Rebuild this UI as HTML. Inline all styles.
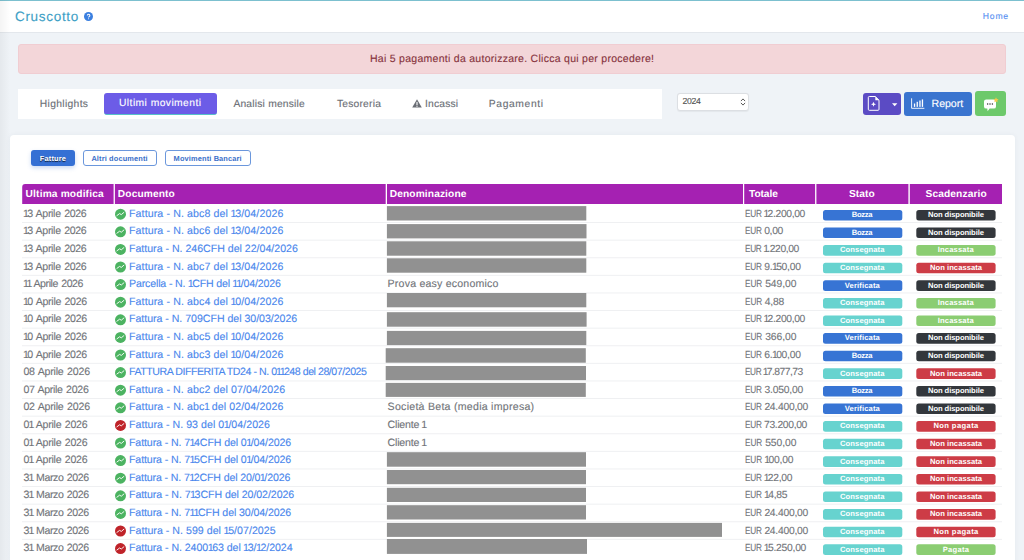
<!DOCTYPE html>
<html><head><meta charset="utf-8">
<style>
*{box-sizing:border-box;margin:0;padding:0}
html,body{width:1024px;height:560px;overflow:hidden}
body{background:#eff3f7;font-family:"Liberation Sans",sans-serif;position:relative;text-rendering:geometricPrecision}
svg{display:block}
.a{position:absolute}
.t{position:absolute;white-space:nowrap;line-height:20px;-webkit-text-stroke:0.12px currentColor}
.n1{margin:0 -1.3px 0 -0.5px}
#hdr{position:absolute;left:0;top:0;width:1024px;height:33px;background:#fff;border-top:1px solid #7cc0cf;border-bottom:1px solid #e3e7ec}
#lshadow{position:absolute;left:0;top:0;width:10px;height:560px;background:linear-gradient(to right,rgba(0,0,0,0.045),rgba(0,0,0,0))}
#alert{position:absolute;left:18px;top:44px;width:988px;height:30px;background:#f3d6d9;border:1px solid #f0cdd2;border-radius:3px}
#tabs{position:absolute;left:18px;top:89px;width:644px;height:30px;background:#fff}
#acttab{position:absolute;left:104px;top:93px;width:113px;height:22px;background:#6c5ce7;border-radius:3px;border-bottom:1px solid #57c1c9}
#year{position:absolute;left:677px;top:93.3px;width:72.3px;height:18.2px;background:#fff;border:1px solid #dcdfe3;border-radius:3px;box-shadow:0 0.5px 1px rgba(0,0,0,0.05)}
.btn{position:absolute;border-radius:3px}
#card{position:absolute;left:10px;top:135px;width:1005px;height:440px;background:#fff;border-radius:4px;box-shadow:0 0 5px rgba(30,50,80,0.05)}
.sbtn{position:absolute;top:150.2px;height:16.1px;border-radius:3px}
#thead{position:absolute;left:23px;top:184px;width:979px;height:20.5px;background:#a521b2;border-radius:3px 3px 0 0}
.sep{position:absolute;top:184px;width:1.5px;height:20.5px;background:#fff}
.line{position:absolute;left:22px;width:980px;height:1px;background:#f1f2f4}
.ic{position:absolute;left:115px;width:11px;height:11px;border-radius:50%}
.g{background:#4cb361}.r{background:#c8282d}
.gray{position:absolute;left:387px;height:14.4px;background:#919191}
.bd{position:absolute;width:79.3px;height:10.5px;border-radius:2.5px}
.s1{left:823px}.s2{left:916.3px}
.bz{background:#3774d4}.cs{background:#62d2cf}.vf{background:#3774d4}
.nd{background:#33373c}.inc{background:#8bcd72}.ni{background:#d33a44}
</style></head><body>
<div id="hdr"></div>
<div class="a" style="left:84.2px;top:12px;width:9.2px;height:9.2px;border-radius:50%;background:#3a7fe0"><svg width="9.2" height="9.2" viewBox="0 0 10 10"><path d="M3.6 3.9 Q3.6 2.5 5 2.5 Q6.4 2.5 6.4 3.8 Q6.4 4.6 5.5 5 Q5 5.3 5 6" fill="none" stroke="#fff" stroke-width="1.1"/><circle cx="5" cy="7.4" r="0.6" fill="#fff"/></svg></div>
<div id="lshadow"></div>
<div id="alert"></div>
<div id="tabs"></div>
<div id="acttab"></div>
<svg class="a" style="left:412px;top:98.6px" width="10" height="9" viewBox="0 0 10 9"><path d="M5 0.2 L9.8 8.6 H0.2Z" fill="#6a6e75"/><rect x="4.45" y="2.9" width="1.1" height="3.2" fill="#fff"/><rect x="4.45" y="6.7" width="1.1" height="1.1" fill="#fff"/></svg>
<div id="year"></div>
<svg class="a" style="left:740.3px;top:98.3px" width="6" height="8" viewBox="0 0 6 8"><path d="M0.9 3.1 L3 0.9 L5.1 3.1 M0.9 4.9 L3 7.1 L5.1 4.9" fill="none" stroke="#5a5a5a" stroke-width="1"/></svg>
<div class="btn" style="left:863px;top:93px;width:38px;height:22px;background:#5b4bc4">
  <svg class="a" style="left:4px;top:2.4px" width="14" height="17" viewBox="0 0 14 17"><path d="M2.3 1.5 H8.3 L12 5.2 V14.3 Q12 15.3 11 15.3 H2.3 Q1.3 15.3 1.3 14.3 V2.5 Q1.3 1.5 2.3 1.5Z" fill="none" stroke="#fff" stroke-width="1"/><path d="M8.3 1.5 V5.2 H12Z" fill="#fff"/><path d="M6.5 6.8 L7.2 8.6 L9 9.3 L7.2 10 L6.5 11.8 L5.8 10 L4 9.3 L5.8 8.6Z" fill="#fff"/></svg>
  <svg class="a" style="left:28.5px;top:9.5px" width="6" height="4" viewBox="0 0 6 4"><path d="M0 0.3 H5.4 L2.7 3.3Z" fill="#fff"/></svg>
</div>
<div class="btn" style="left:904px;top:92px;width:68px;height:24px;background:#3a74cf">
  <svg class="a" style="left:6.5px;top:5.5px" width="14" height="11" viewBox="0 0 14 11"><path d="M0.6 0.3 V10.3 H13.4" fill="none" stroke="#fff" stroke-width="0.9"/><rect x="2.9" y="5.5" width="1.3" height="3.4" fill="#fff"/><rect x="5.6" y="3.8" width="1.3" height="5.1" fill="#fff"/><rect x="8.3" y="2.5" width="1.3" height="6.4" fill="#fff"/><rect x="10.8" y="1.4" width="1.3" height="7.5" fill="#fff"/></svg>
</div>
<div class="btn" style="left:974.5px;top:91.3px;width:31.5px;height:24.7px;background:#6dc96b">
  <svg class="a" style="left:8px;top:5.5px" width="16" height="15" viewBox="0 0 16 15"><path d="M3.2 2.4 H10.8 Q13 2.4 13 4.6 V9.4 Q13 11.6 10.8 11.6 H6.6 L4.6 14.2 L4.3 11.6 H3.2 Q1 11.6 1 9.4 V4.6 Q1 2.4 3.2 2.4Z" fill="#fff"/><circle cx="4.6" cy="7" r="0.75" fill="#333"/><circle cx="7" cy="7" r="0.75" fill="#333"/><circle cx="9.4" cy="7" r="0.75" fill="#333"/><path d="M13 0.3 L13.8 2 L15.6 2.3 L14.3 3.5 L14.6 5.3 L13 4.4 L11.4 5.3 L11.7 3.5 L10.4 2.3 L12.2 2Z" fill="#f5c84a"/></svg>
</div>
<div id="card"></div>
<div class="sbtn" style="left:31px;width:44px;background:#3570d4;box-shadow:0 2px 4px rgba(53,112,212,0.25)"></div>
<div class="sbtn" style="left:83px;width:74px;border:1px solid #6b97dc"></div>
<div class="sbtn" style="left:164.5px;width:86.2px;border:1px solid #6b97dc"></div>
<svg class="a" style="left:0;top:0" width="1024" height="560" viewBox="0 0 1024 560">
<path d="M22.2 204 V187 Q22.2 184 25.2 184 H1002 V204Z" fill="#a521b2"/>
<rect x="113.6" y="184" width="1.3" height="20" fill="#fff"/>
<rect x="385.7" y="184" width="1.3" height="20" fill="#fff"/>
<rect x="743" y="184" width="1.2" height="20" fill="#fff"/>
<rect x="815.1" y="184" width="1.3" height="20" fill="#fff"/>
<rect x="908.4" y="184" width="1.4" height="20" fill="#fff"/>
<rect x="386.9" y="206.1" width="199.40" height="14.40" fill="#919191"/>
<rect x="823" y="209.90" width="79.3" height="10.6" rx="2.5" fill="#3774d4"/>
<rect x="916.3" y="209.90" width="79.3" height="10.6" rx="2.5" fill="#33373c"/>
<g transform="translate(115,208.70)"><circle cx="5.5" cy="5.5" r="5.5" fill="#4cb361"/><path d="M1.9 6.9 L4.6 4.9 L6.3 5.9 L8.9 3.7" stroke="#fff" stroke-width="1" fill="none" stroke-linecap="round" stroke-linejoin="round" opacity="0.92"/></g>
<rect x="22" y="222.05" width="980" height="1" fill="#eff0f2"/>
<rect x="386.9" y="224.1" width="199.60" height="14.30" fill="#919191"/>
<rect x="823" y="227.50" width="79.3" height="10.6" rx="2.5" fill="#3774d4"/>
<rect x="916.3" y="227.50" width="79.3" height="10.6" rx="2.5" fill="#33373c"/>
<g transform="translate(115,226.30)"><circle cx="5.5" cy="5.5" r="5.5" fill="#4cb361"/><path d="M1.9 6.9 L4.6 4.9 L6.3 5.9 L8.9 3.7" stroke="#fff" stroke-width="1" fill="none" stroke-linecap="round" stroke-linejoin="round" opacity="0.92"/></g>
<rect x="22" y="239.65" width="980" height="1" fill="#eff0f2"/>
<rect x="386.9" y="241.3" width="199.40" height="14.40" fill="#919191"/>
<rect x="823" y="245.10" width="79.3" height="10.6" rx="2.5" fill="#67d3cf"/>
<rect x="916.3" y="245.10" width="79.3" height="10.6" rx="2.5" fill="#8bcd72"/>
<g transform="translate(115,243.90)"><circle cx="5.5" cy="5.5" r="5.5" fill="#4cb361"/><path d="M1.9 6.9 L4.6 4.9 L6.3 5.9 L8.9 3.7" stroke="#fff" stroke-width="1" fill="none" stroke-linecap="round" stroke-linejoin="round" opacity="0.92"/></g>
<rect x="22" y="257.25" width="980" height="1" fill="#eff0f2"/>
<rect x="386.9" y="258.3" width="199.40" height="14.40" fill="#919191"/>
<rect x="823" y="262.70" width="79.3" height="10.6" rx="2.5" fill="#67d3cf"/>
<rect x="916.3" y="262.70" width="79.3" height="10.6" rx="2.5" fill="#cd3c46"/>
<g transform="translate(115,261.50)"><circle cx="5.5" cy="5.5" r="5.5" fill="#4cb361"/><path d="M1.9 6.9 L4.6 4.9 L6.3 5.9 L8.9 3.7" stroke="#fff" stroke-width="1" fill="none" stroke-linecap="round" stroke-linejoin="round" opacity="0.92"/></g>
<rect x="22" y="274.85" width="980" height="1" fill="#eff0f2"/>
<rect x="823" y="280.30" width="79.3" height="10.6" rx="2.5" fill="#3774d4"/>
<rect x="916.3" y="280.30" width="79.3" height="10.6" rx="2.5" fill="#33373c"/>
<g transform="translate(115,279.10)"><circle cx="5.5" cy="5.5" r="5.5" fill="#4cb361"/><path d="M1.9 6.9 L4.6 4.9 L6.3 5.9 L8.9 3.7" stroke="#fff" stroke-width="1" fill="none" stroke-linecap="round" stroke-linejoin="round" opacity="0.92"/></g>
<rect x="22" y="292.45" width="980" height="1" fill="#eff0f2"/>
<rect x="386.9" y="293.0" width="199.40" height="14.30" fill="#919191"/>
<rect x="823" y="297.90" width="79.3" height="10.6" rx="2.5" fill="#67d3cf"/>
<rect x="916.3" y="297.90" width="79.3" height="10.6" rx="2.5" fill="#8bcd72"/>
<g transform="translate(115,296.70)"><circle cx="5.5" cy="5.5" r="5.5" fill="#4cb361"/><path d="M1.9 6.9 L4.6 4.9 L6.3 5.9 L8.9 3.7" stroke="#fff" stroke-width="1" fill="none" stroke-linecap="round" stroke-linejoin="round" opacity="0.92"/></g>
<rect x="22" y="310.05" width="980" height="1" fill="#eff0f2"/>
<rect x="386.9" y="312.2" width="199.70" height="14.50" fill="#919191"/>
<rect x="823" y="315.50" width="79.3" height="10.6" rx="2.5" fill="#67d3cf"/>
<rect x="916.3" y="315.50" width="79.3" height="10.6" rx="2.5" fill="#8bcd72"/>
<g transform="translate(115,314.30)"><circle cx="5.5" cy="5.5" r="5.5" fill="#4cb361"/><path d="M1.9 6.9 L4.6 4.9 L6.3 5.9 L8.9 3.7" stroke="#fff" stroke-width="1" fill="none" stroke-linecap="round" stroke-linejoin="round" opacity="0.92"/></g>
<rect x="22" y="327.65" width="980" height="1" fill="#eff0f2"/>
<rect x="386.9" y="330.9" width="199.40" height="14.60" fill="#919191"/>
<rect x="823" y="333.10" width="79.3" height="10.6" rx="2.5" fill="#3774d4"/>
<rect x="916.3" y="333.10" width="79.3" height="10.6" rx="2.5" fill="#33373c"/>
<g transform="translate(115,331.90)"><circle cx="5.5" cy="5.5" r="5.5" fill="#4cb361"/><path d="M1.9 6.9 L4.6 4.9 L6.3 5.9 L8.9 3.7" stroke="#fff" stroke-width="1" fill="none" stroke-linecap="round" stroke-linejoin="round" opacity="0.92"/></g>
<rect x="22" y="345.25" width="980" height="1" fill="#eff0f2"/>
<rect x="385.7" y="348.2" width="200.10" height="14.60" fill="#919191"/>
<rect x="823" y="350.70" width="79.3" height="10.6" rx="2.5" fill="#3774d4"/>
<rect x="916.3" y="350.70" width="79.3" height="10.6" rx="2.5" fill="#33373c"/>
<g transform="translate(115,349.50)"><circle cx="5.5" cy="5.5" r="5.5" fill="#4cb361"/><path d="M1.9 6.9 L4.6 4.9 L6.3 5.9 L8.9 3.7" stroke="#fff" stroke-width="1" fill="none" stroke-linecap="round" stroke-linejoin="round" opacity="0.92"/></g>
<rect x="22" y="362.85" width="980" height="1" fill="#eff0f2"/>
<rect x="385.7" y="366.0" width="200.30" height="14.30" fill="#919191"/>
<rect x="823" y="368.30" width="79.3" height="10.6" rx="2.5" fill="#67d3cf"/>
<rect x="916.3" y="368.30" width="79.3" height="10.6" rx="2.5" fill="#cd3c46"/>
<g transform="translate(115,367.10)"><circle cx="5.5" cy="5.5" r="5.5" fill="#4cb361"/><path d="M1.9 6.9 L4.6 4.9 L6.3 5.9 L8.9 3.7" stroke="#fff" stroke-width="1" fill="none" stroke-linecap="round" stroke-linejoin="round" opacity="0.92"/></g>
<rect x="22" y="380.45" width="980" height="1" fill="#eff0f2"/>
<rect x="385.7" y="382.9" width="200.10" height="14.00" fill="#919191"/>
<rect x="823" y="385.90" width="79.3" height="10.6" rx="2.5" fill="#3774d4"/>
<rect x="916.3" y="385.90" width="79.3" height="10.6" rx="2.5" fill="#33373c"/>
<g transform="translate(115,384.70)"><circle cx="5.5" cy="5.5" r="5.5" fill="#4cb361"/><path d="M1.9 6.9 L4.6 4.9 L6.3 5.9 L8.9 3.7" stroke="#fff" stroke-width="1" fill="none" stroke-linecap="round" stroke-linejoin="round" opacity="0.92"/></g>
<rect x="22" y="398.05" width="980" height="1" fill="#eff0f2"/>
<rect x="823" y="403.50" width="79.3" height="10.6" rx="2.5" fill="#3774d4"/>
<rect x="916.3" y="403.50" width="79.3" height="10.6" rx="2.5" fill="#33373c"/>
<g transform="translate(115,402.30)"><circle cx="5.5" cy="5.5" r="5.5" fill="#4cb361"/><path d="M1.9 6.9 L4.6 4.9 L6.3 5.9 L8.9 3.7" stroke="#fff" stroke-width="1" fill="none" stroke-linecap="round" stroke-linejoin="round" opacity="0.92"/></g>
<rect x="22" y="415.65" width="980" height="1" fill="#eff0f2"/>
<rect x="823" y="421.10" width="79.3" height="10.6" rx="2.5" fill="#67d3cf"/>
<rect x="916.3" y="421.10" width="79.3" height="10.6" rx="2.5" fill="#cd3c46"/>
<g transform="translate(115,419.90)"><circle cx="5.5" cy="5.5" r="5.5" fill="#bf2329"/><path d="M1.9 6.9 L4.6 4.9 L6.3 5.9 L8.9 3.7" stroke="#fff" stroke-width="1" fill="none" stroke-linecap="round" stroke-linejoin="round" opacity="0.92"/></g>
<rect x="22" y="433.25" width="980" height="1" fill="#eff0f2"/>
<rect x="823" y="438.70" width="79.3" height="10.6" rx="2.5" fill="#67d3cf"/>
<rect x="916.3" y="438.70" width="79.3" height="10.6" rx="2.5" fill="#cd3c46"/>
<g transform="translate(115,437.50)"><circle cx="5.5" cy="5.5" r="5.5" fill="#4cb361"/><path d="M1.9 6.9 L4.6 4.9 L6.3 5.9 L8.9 3.7" stroke="#fff" stroke-width="1" fill="none" stroke-linecap="round" stroke-linejoin="round" opacity="0.92"/></g>
<rect x="22" y="450.85" width="980" height="1" fill="#eff0f2"/>
<rect x="386.9" y="452.2" width="199.10" height="14.50" fill="#919191"/>
<rect x="823" y="456.30" width="79.3" height="10.6" rx="2.5" fill="#67d3cf"/>
<rect x="916.3" y="456.30" width="79.3" height="10.6" rx="2.5" fill="#cd3c46"/>
<g transform="translate(115,455.10)"><circle cx="5.5" cy="5.5" r="5.5" fill="#4cb361"/><path d="M1.9 6.9 L4.6 4.9 L6.3 5.9 L8.9 3.7" stroke="#fff" stroke-width="1" fill="none" stroke-linecap="round" stroke-linejoin="round" opacity="0.92"/></g>
<rect x="22" y="468.45" width="980" height="1" fill="#eff0f2"/>
<rect x="386.9" y="470.0" width="199.10" height="14.20" fill="#919191"/>
<rect x="823" y="473.90" width="79.3" height="10.6" rx="2.5" fill="#67d3cf"/>
<rect x="916.3" y="473.90" width="79.3" height="10.6" rx="2.5" fill="#cd3c46"/>
<g transform="translate(115,472.70)"><circle cx="5.5" cy="5.5" r="5.5" fill="#4cb361"/><path d="M1.9 6.9 L4.6 4.9 L6.3 5.9 L8.9 3.7" stroke="#fff" stroke-width="1" fill="none" stroke-linecap="round" stroke-linejoin="round" opacity="0.92"/></g>
<rect x="22" y="486.05" width="980" height="1" fill="#eff0f2"/>
<rect x="386.9" y="487.8" width="199.10" height="14.20" fill="#919191"/>
<rect x="823" y="491.50" width="79.3" height="10.6" rx="2.5" fill="#67d3cf"/>
<rect x="916.3" y="491.50" width="79.3" height="10.6" rx="2.5" fill="#cd3c46"/>
<g transform="translate(115,490.30)"><circle cx="5.5" cy="5.5" r="5.5" fill="#4cb361"/><path d="M1.9 6.9 L4.6 4.9 L6.3 5.9 L8.9 3.7" stroke="#fff" stroke-width="1" fill="none" stroke-linecap="round" stroke-linejoin="round" opacity="0.92"/></g>
<rect x="22" y="503.65" width="980" height="1" fill="#eff0f2"/>
<rect x="386.9" y="505.2" width="199.10" height="14.30" fill="#919191"/>
<rect x="823" y="509.10" width="79.3" height="10.6" rx="2.5" fill="#67d3cf"/>
<rect x="916.3" y="509.10" width="79.3" height="10.6" rx="2.5" fill="#cd3c46"/>
<g transform="translate(115,507.90)"><circle cx="5.5" cy="5.5" r="5.5" fill="#4cb361"/><path d="M1.9 6.9 L4.6 4.9 L6.3 5.9 L8.9 3.7" stroke="#fff" stroke-width="1" fill="none" stroke-linecap="round" stroke-linejoin="round" opacity="0.92"/></g>
<rect x="22" y="521.25" width="980" height="1" fill="#eff0f2"/>
<rect x="386.9" y="522.9" width="335.10" height="14.00" fill="#919191"/>
<rect x="823" y="526.70" width="79.3" height="10.6" rx="2.5" fill="#67d3cf"/>
<rect x="916.3" y="526.70" width="79.3" height="10.6" rx="2.5" fill="#cd3c46"/>
<g transform="translate(115,525.50)"><circle cx="5.5" cy="5.5" r="5.5" fill="#bf2329"/><path d="M1.9 6.9 L4.6 4.9 L6.3 5.9 L8.9 3.7" stroke="#fff" stroke-width="1" fill="none" stroke-linecap="round" stroke-linejoin="round" opacity="0.92"/></g>
<rect x="22" y="538.85" width="980" height="1" fill="#eff0f2"/>
<rect x="386.9" y="539.0" width="200.10" height="14.90" fill="#919191"/>
<rect x="823" y="544.30" width="79.3" height="10.6" rx="2.5" fill="#67d3cf"/>
<rect x="916.3" y="544.30" width="79.3" height="10.6" rx="2.5" fill="#8bcd72"/>
<g transform="translate(115,543.10)"><circle cx="5.5" cy="5.5" r="5.5" fill="#bf2329"/><path d="M1.9 6.9 L4.6 4.9 L6.3 5.9 L8.9 3.7" stroke="#fff" stroke-width="1" fill="none" stroke-linecap="round" stroke-linejoin="round" opacity="0.92"/></g>
</svg>
<div class="t" id="t0" style="left:15.00px;top:6.71px;font-size:13.5px;font-weight:400;color:#3e9fc6;letter-spacing:0.688px;">Cruscotto</div>
<div class="t" id="t1" style="left:982.80px;top:5.91px;font-size:8.6px;font-weight:400;color:#5790f2;letter-spacing:0.800px;">Home</div>
<div class="t" id="t2" style="left:370.00px;top:48.70px;font-size:10.5px;font-weight:400;color:#86323c;letter-spacing:0.277px;">Hai 5 pagamenti da autorizzare. Clicca qui per procedere!</div>
<div class="t" id="t3" style="left:39.80px;top:94.72px;font-size:10.3px;font-weight:400;color:#6a6e75;letter-spacing:0.333px;">Highlights</div>
<div class="t" id="t4" style="left:119.00px;top:94.00px;font-size:10.3px;font-weight:400;color:#ffffff;letter-spacing:0.433px;">Ultimi movimenti</div>
<div class="t" id="t5" style="left:233.40px;top:94.81px;font-size:10.3px;font-weight:400;color:#6a6e75;letter-spacing:0.193px;">Analisi mensile</div>
<div class="t" id="t6" style="left:337.00px;top:94.72px;font-size:10.3px;font-weight:400;color:#6a6e75;letter-spacing:0.188px;">Tesoreria</div>
<div class="t" id="t7" style="left:425.00px;top:94.72px;font-size:10.3px;font-weight:400;color:#6a6e75;letter-spacing:0.167px;">Incassi</div>
<div class="t" id="t8" style="left:488.80px;top:94.72px;font-size:10.3px;font-weight:400;color:#6a6e75;letter-spacing:0.625px;">Pagamenti</div>
<div class="t" id="t9" style="left:682.40px;top:91.20px;font-size:8.7px;font-weight:400;color:#555555;letter-spacing:-0.333px;">2024</div>
<div class="t" id="t10" style="left:931.60px;top:93.76px;font-size:10.6px;font-weight:400;color:#ffffff;letter-spacing:-0.060px;">Report</div>
<div class="t" id="t11" style="left:39.80px;top:148.82px;font-size:7.4px;font-weight:700;color:#ffffff;letter-spacing:0.167px;text-shadow:0 0.6px 0.8px rgba(0,0,0,0.75);-webkit-text-stroke:0">Fatture</div>
<div class="t" id="t12" style="left:91.40px;top:148.82px;font-size:7.4px;font-weight:700;color:#3a6fc9;letter-spacing:0.143px;;-webkit-text-stroke:0">Altri documenti</div>
<div class="t" id="t13" style="left:173.60px;top:148.82px;font-size:7.4px;font-weight:700;color:#3a6fc9;letter-spacing:0.144px;;-webkit-text-stroke:0">Movimenti Bancari</div>
<div class="t" id="t14" style="left:25.60px;top:185.00px;font-size:10.2px;font-weight:700;color:#ffffff;letter-spacing:0.157px;;-webkit-text-stroke:0">Ultima modifica</div>
<div class="t" id="t15" style="left:117.80px;top:185.00px;font-size:10.2px;font-weight:700;color:#ffffff;letter-spacing:0.125px;;-webkit-text-stroke:0">Documento</div>
<div class="t" id="t16" style="left:389.80px;top:185.00px;font-size:10.2px;font-weight:700;color:#ffffff;letter-spacing:0.108px;;-webkit-text-stroke:0">Denominazione</div>
<div class="t" id="t17" style="left:749.00px;top:185.00px;font-size:10.2px;font-weight:700;color:#ffffff;letter-spacing:-0.080px;;-webkit-text-stroke:0">Totale</div>
<div class="t" id="t18" style="left:849.00px;top:185.00px;font-size:10.2px;font-weight:700;color:#ffffff;letter-spacing:0.062px;;-webkit-text-stroke:0">Stato</div>
<div class="t" id="t19" style="left:925.60px;top:185.00px;font-size:10.2px;font-weight:700;color:#ffffff;letter-spacing:0.100px;;-webkit-text-stroke:0">Scadenzario</div>
<div class="t" id="t20" style="left:23.40px;top:203.70px;font-size:10.6px;font-weight:400;color:#717479;letter-spacing:-0.323px;word-spacing:0.8px"><span class="n1">1</span>3 Aprile 2026</div>
<div class="t" id="t21" style="left:129.00px;top:203.70px;font-size:10.6px;font-weight:400;color:#4a87ed;letter-spacing:0.116px;">Fattura - N. abc8 del <span class="n1">1</span>3/04/2026</div>
<div class="t" id="t22" style="left:745.00px;top:204.72px;font-size:10.3px;font-weight:400;color:#717479;letter-spacing:-0.333px;"><span style="display:inline-block;transform:scaleX(0.8);transform-origin:0 0;margin-right:-4.3px">EUR</span> <span class="n1">1</span>2.200,00</div>
<div class="t" id="t23" style="left:851.80px;top:205.11px;font-size:7.6px;font-weight:700;color:#ffffff;letter-spacing:-0.325px;;-webkit-text-stroke:0">Bozza</div>
<div class="t" id="t24" style="left:928.00px;top:205.11px;font-size:7.6px;font-weight:700;color:#ffffff;letter-spacing:-0.071px;;-webkit-text-stroke:0">Non disponibile</div>
<div class="t" id="t25" style="left:23.40px;top:221.31px;font-size:10.6px;font-weight:400;color:#717479;letter-spacing:-0.323px;word-spacing:0.8px"><span class="n1">1</span>3 Aprile 2026</div>
<div class="t" id="t26" style="left:129.00px;top:221.31px;font-size:10.6px;font-weight:400;color:#4a87ed;letter-spacing:0.116px;">Fattura - N. abc6 del <span class="n1">1</span>3/04/2026</div>
<div class="t" id="t27" style="left:745.00px;top:222.31px;font-size:10.3px;font-weight:400;color:#717479;letter-spacing:-0.286px;"><span style="display:inline-block;transform:scaleX(0.8);transform-origin:0 0;margin-right:-4.3px">EUR</span> 0,00</div>
<div class="t" id="t28" style="left:851.80px;top:222.70px;font-size:7.6px;font-weight:700;color:#ffffff;letter-spacing:-0.325px;;-webkit-text-stroke:0">Bozza</div>
<div class="t" id="t29" style="left:928.00px;top:222.70px;font-size:7.6px;font-weight:700;color:#ffffff;letter-spacing:-0.071px;;-webkit-text-stroke:0">Non disponibile</div>
<div class="t" id="t30" style="left:23.40px;top:238.90px;font-size:10.6px;font-weight:400;color:#717479;letter-spacing:-0.323px;word-spacing:0.8px"><span class="n1">1</span>3 Aprile 2026</div>
<div class="t" id="t31" style="left:129.00px;top:238.90px;font-size:10.6px;font-weight:400;color:#4a87ed;letter-spacing:-0.006px;">Fattura - N. 246CFH del 22/04/2026</div>
<div class="t" id="t32" style="left:745.00px;top:239.91px;font-size:10.3px;font-weight:400;color:#717479;letter-spacing:-0.391px;"><span style="display:inline-block;transform:scaleX(0.8);transform-origin:0 0;margin-right:-4.3px">EUR</span> <span class="n1">1</span>.220,00</div>
<div class="t" id="t33" style="left:840.00px;top:240.30px;font-size:7.6px;font-weight:700;color:#ffffff;letter-spacing:0.111px;;-webkit-text-stroke:0">Consegnata</div>
<div class="t" id="t34" style="left:937.80px;top:240.30px;font-size:7.6px;font-weight:700;color:#ffffff;letter-spacing:0.150px;;-webkit-text-stroke:0">Incassata</div>
<div class="t" id="t35" style="left:23.40px;top:256.51px;font-size:10.6px;font-weight:400;color:#717479;letter-spacing:-0.323px;word-spacing:0.8px"><span class="n1">1</span>3 Aprile 2026</div>
<div class="t" id="t36" style="left:129.00px;top:256.51px;font-size:10.6px;font-weight:400;color:#4a87ed;letter-spacing:0.116px;">Fattura - N. abc7 del <span class="n1">1</span>3/04/2026</div>
<div class="t" id="t37" style="left:745.00px;top:257.50px;font-size:10.3px;font-weight:400;color:#717479;letter-spacing:-0.245px;"><span style="display:inline-block;transform:scaleX(0.8);transform-origin:0 0;margin-right:-4.3px">EUR</span> 9.<span class="n1">1</span>50,00</div>
<div class="t" id="t38" style="left:840.00px;top:257.91px;font-size:7.6px;font-weight:700;color:#ffffff;letter-spacing:0.111px;;-webkit-text-stroke:0">Consegnata</div>
<div class="t" id="t39" style="left:930.00px;top:257.91px;font-size:7.6px;font-weight:700;color:#ffffff;letter-spacing:0.042px;;-webkit-text-stroke:0">Non incassata</div>
<div class="t" id="t40" style="left:23.40px;top:274.10px;font-size:10.6px;font-weight:400;color:#717479;letter-spacing:-0.438px;word-spacing:0.8px"><span class="n1">1</span><span class="n1">1</span> Aprile 2026</div>
<div class="t" id="t41" style="left:129.00px;top:274.10px;font-size:10.6px;font-weight:400;color:#4a87ed;letter-spacing:-0.144px;">Parcella - N. <span class="n1">1</span>CFH del <span class="n1">1</span><span class="n1">1</span>/04/2026</div>
<div class="t" id="t42" style="left:387.60px;top:274.10px;font-size:10.6px;font-weight:400;color:#717479;letter-spacing:0.195px;">Prova easy economico</div>
<div class="t" id="t43" style="left:745.00px;top:275.11px;font-size:10.3px;font-weight:400;color:#717479;letter-spacing:-0.044px;"><span style="display:inline-block;transform:scaleX(0.8);transform-origin:0 0;margin-right:-4.3px">EUR</span> 549,00</div>
<div class="t" id="t44" style="left:844.80px;top:275.50px;font-size:7.6px;font-weight:700;color:#ffffff;letter-spacing:0.133px;;-webkit-text-stroke:0">Verificata</div>
<div class="t" id="t45" style="left:928.00px;top:275.50px;font-size:7.6px;font-weight:700;color:#ffffff;letter-spacing:-0.071px;;-webkit-text-stroke:0">Non disponibile</div>
<div class="t" id="t46" style="left:23.40px;top:291.70px;font-size:10.6px;font-weight:400;color:#717479;letter-spacing:-0.285px;word-spacing:0.8px"><span class="n1">1</span>0 Aprile 2026</div>
<div class="t" id="t47" style="left:129.00px;top:291.70px;font-size:10.6px;font-weight:400;color:#4a87ed;letter-spacing:0.116px;">Fattura - N. abc4 del <span class="n1">1</span>0/04/2026</div>
<div class="t" id="t48" style="left:745.00px;top:292.72px;font-size:10.3px;font-weight:400;color:#717479;letter-spacing:-0.143px;"><span style="display:inline-block;transform:scaleX(0.8);transform-origin:0 0;margin-right:-4.3px">EUR</span> 4,88</div>
<div class="t" id="t49" style="left:840.00px;top:293.11px;font-size:7.6px;font-weight:700;color:#ffffff;letter-spacing:0.111px;;-webkit-text-stroke:0">Consegnata</div>
<div class="t" id="t50" style="left:937.80px;top:293.11px;font-size:7.6px;font-weight:700;color:#ffffff;letter-spacing:0.150px;;-webkit-text-stroke:0">Incassata</div>
<div class="t" id="t51" style="left:23.40px;top:309.31px;font-size:10.6px;font-weight:400;color:#717479;letter-spacing:-0.285px;word-spacing:0.8px"><span class="n1">1</span>0 Aprile 2026</div>
<div class="t" id="t52" style="left:129.00px;top:309.31px;font-size:10.6px;font-weight:400;color:#4a87ed;letter-spacing:-0.024px;">Fattura - N. 709CFH del 30/03/2026</div>
<div class="t" id="t53" style="left:745.00px;top:310.31px;font-size:10.3px;font-weight:400;color:#717479;letter-spacing:-0.333px;"><span style="display:inline-block;transform:scaleX(0.8);transform-origin:0 0;margin-right:-4.3px">EUR</span> <span class="n1">1</span>2.200,00</div>
<div class="t" id="t54" style="left:840.00px;top:310.70px;font-size:7.6px;font-weight:700;color:#ffffff;letter-spacing:0.111px;;-webkit-text-stroke:0">Consegnata</div>
<div class="t" id="t55" style="left:937.80px;top:310.70px;font-size:7.6px;font-weight:700;color:#ffffff;letter-spacing:0.150px;;-webkit-text-stroke:0">Incassata</div>
<div class="t" id="t56" style="left:23.40px;top:326.90px;font-size:10.6px;font-weight:400;color:#717479;letter-spacing:-0.285px;word-spacing:0.8px"><span class="n1">1</span>0 Aprile 2026</div>
<div class="t" id="t57" style="left:129.00px;top:326.90px;font-size:10.6px;font-weight:400;color:#4a87ed;letter-spacing:0.116px;">Fattura - N. abc5 del <span class="n1">1</span>0/04/2026</div>
<div class="t" id="t58" style="left:745.00px;top:327.91px;font-size:10.3px;font-weight:400;color:#717479;letter-spacing:-0.044px;"><span style="display:inline-block;transform:scaleX(0.8);transform-origin:0 0;margin-right:-4.3px">EUR</span> 366,00</div>
<div class="t" id="t59" style="left:844.80px;top:328.30px;font-size:7.6px;font-weight:700;color:#ffffff;letter-spacing:0.133px;;-webkit-text-stroke:0">Verificata</div>
<div class="t" id="t60" style="left:928.00px;top:328.30px;font-size:7.6px;font-weight:700;color:#ffffff;letter-spacing:-0.071px;;-webkit-text-stroke:0">Non disponibile</div>
<div class="t" id="t61" style="left:23.40px;top:344.51px;font-size:10.6px;font-weight:400;color:#717479;letter-spacing:-0.285px;word-spacing:0.8px"><span class="n1">1</span>0 Aprile 2026</div>
<div class="t" id="t62" style="left:129.00px;top:344.51px;font-size:10.6px;font-weight:400;color:#4a87ed;letter-spacing:0.116px;">Fattura - N. abc3 del <span class="n1">1</span>0/04/2026</div>
<div class="t" id="t63" style="left:745.00px;top:345.50px;font-size:10.3px;font-weight:400;color:#717479;letter-spacing:-0.245px;"><span style="display:inline-block;transform:scaleX(0.8);transform-origin:0 0;margin-right:-4.3px">EUR</span> 6.<span class="n1">1</span>00,00</div>
<div class="t" id="t64" style="left:851.80px;top:345.91px;font-size:7.6px;font-weight:700;color:#ffffff;letter-spacing:-0.325px;;-webkit-text-stroke:0">Bozza</div>
<div class="t" id="t65" style="left:928.00px;top:345.91px;font-size:7.6px;font-weight:700;color:#ffffff;letter-spacing:-0.071px;;-webkit-text-stroke:0">Non disponibile</div>
<div class="t" id="t66" style="left:23.40px;top:362.10px;font-size:10.6px;font-weight:400;color:#717479;letter-spacing:-0.208px;word-spacing:0.8px">08 Aprile 2026</div>
<div class="t" id="t67" style="left:129.00px;top:362.10px;font-size:10.6px;font-weight:400;color:#4a87ed;letter-spacing:-0.452px;">FATTURA DIFFERITA TD24 - N. 0<span class="n1">1</span><span class="n1">1</span>248 del 28/07/2025</div>
<div class="t" id="t68" style="left:745.00px;top:363.11px;font-size:10.3px;font-weight:400;color:#717479;letter-spacing:-0.508px;"><span style="display:inline-block;transform:scaleX(0.8);transform-origin:0 0;margin-right:-4.3px">EUR</span> <span class="n1">1</span>7.877,73</div>
<div class="t" id="t69" style="left:840.00px;top:363.50px;font-size:7.6px;font-weight:700;color:#ffffff;letter-spacing:0.111px;;-webkit-text-stroke:0">Consegnata</div>
<div class="t" id="t70" style="left:930.00px;top:363.50px;font-size:7.6px;font-weight:700;color:#ffffff;letter-spacing:0.042px;;-webkit-text-stroke:0">Non incassata</div>
<div class="t" id="t71" style="left:23.40px;top:379.70px;font-size:10.6px;font-weight:400;color:#717479;letter-spacing:-0.304px;word-spacing:0.8px">07 Aprile 2026</div>
<div class="t" id="t72" style="left:129.00px;top:379.70px;font-size:10.6px;font-weight:400;color:#4a87ed;letter-spacing:0.113px;">Fattura - N. abc2 del 07/04/2026</div>
<div class="t" id="t73" style="left:745.00px;top:380.72px;font-size:10.3px;font-weight:400;color:#717479;letter-spacing:-0.200px;"><span style="display:inline-block;transform:scaleX(0.8);transform-origin:0 0;margin-right:-4.3px">EUR</span> 3.050,00</div>
<div class="t" id="t74" style="left:851.80px;top:381.11px;font-size:7.6px;font-weight:700;color:#ffffff;letter-spacing:-0.325px;;-webkit-text-stroke:0">Bozza</div>
<div class="t" id="t75" style="left:928.00px;top:381.11px;font-size:7.6px;font-weight:700;color:#ffffff;letter-spacing:-0.071px;;-webkit-text-stroke:0">Non disponibile</div>
<div class="t" id="t76" style="left:23.40px;top:397.31px;font-size:10.6px;font-weight:400;color:#717479;letter-spacing:-0.208px;word-spacing:0.8px">02 Aprile 2026</div>
<div class="t" id="t77" style="left:129.00px;top:397.31px;font-size:10.6px;font-weight:400;color:#4a87ed;letter-spacing:0.116px;">Fattura - N. abc<span class="n1">1</span> del 02/04/2026</div>
<div class="t" id="t78" style="left:387.60px;top:397.31px;font-size:10.6px;font-weight:400;color:#717479;letter-spacing:0.259px;">Società Beta (media impresa)</div>
<div class="t" id="t79" style="left:745.00px;top:398.31px;font-size:10.3px;font-weight:400;color:#717479;letter-spacing:-0.233px;"><span style="display:inline-block;transform:scaleX(0.8);transform-origin:0 0;margin-right:-4.3px">EUR</span> 24.400,00</div>
<div class="t" id="t80" style="left:844.80px;top:398.70px;font-size:7.6px;font-weight:700;color:#ffffff;letter-spacing:0.133px;;-webkit-text-stroke:0">Verificata</div>
<div class="t" id="t81" style="left:928.00px;top:398.70px;font-size:7.6px;font-weight:700;color:#ffffff;letter-spacing:-0.071px;;-webkit-text-stroke:0">Non disponibile</div>
<div class="t" id="t82" style="left:23.40px;top:414.90px;font-size:10.6px;font-weight:400;color:#717479;letter-spacing:-0.254px;word-spacing:0.8px">0<span class="n1">1</span> Aprile 2026</div>
<div class="t" id="t83" style="left:129.00px;top:414.90px;font-size:10.6px;font-weight:400;color:#4a87ed;letter-spacing:0.048px;">Fattura - N. 93 del 0<span class="n1">1</span>/04/2026</div>
<div class="t" id="t84" style="left:387.60px;top:414.90px;font-size:10.6px;font-weight:400;color:#717479;letter-spacing:-0.212px;">Cliente <span class="n1">1</span></div>
<div class="t" id="t85" style="left:745.00px;top:415.91px;font-size:10.3px;font-weight:400;color:#717479;letter-spacing:-0.317px;"><span style="display:inline-block;transform:scaleX(0.8);transform-origin:0 0;margin-right:-4.3px">EUR</span> 73.200,00</div>
<div class="t" id="t86" style="left:840.00px;top:416.30px;font-size:7.6px;font-weight:700;color:#ffffff;letter-spacing:0.111px;;-webkit-text-stroke:0">Consegnata</div>
<div class="t" id="t87" style="left:933.40px;top:416.30px;font-size:7.6px;font-weight:700;color:#ffffff;letter-spacing:0.400px;;-webkit-text-stroke:0">Non pagata</div>
<div class="t" id="t88" style="left:23.40px;top:432.51px;font-size:10.6px;font-weight:400;color:#717479;letter-spacing:-0.254px;word-spacing:0.8px">0<span class="n1">1</span> Aprile 2026</div>
<div class="t" id="t89" style="left:129.00px;top:432.51px;font-size:10.6px;font-weight:400;color:#4a87ed;letter-spacing:-0.097px;">Fattura - N. 7<span class="n1">1</span>4CFH del 0<span class="n1">1</span>/04/2026</div>
<div class="t" id="t90" style="left:387.60px;top:432.51px;font-size:10.6px;font-weight:400;color:#717479;letter-spacing:-0.212px;">Cliente <span class="n1">1</span></div>
<div class="t" id="t91" style="left:745.00px;top:433.50px;font-size:10.3px;font-weight:400;color:#717479;letter-spacing:-0.044px;"><span style="display:inline-block;transform:scaleX(0.8);transform-origin:0 0;margin-right:-4.3px">EUR</span> 550,00</div>
<div class="t" id="t92" style="left:840.00px;top:433.91px;font-size:7.6px;font-weight:700;color:#ffffff;letter-spacing:0.111px;;-webkit-text-stroke:0">Consegnata</div>
<div class="t" id="t93" style="left:930.00px;top:433.91px;font-size:7.6px;font-weight:700;color:#ffffff;letter-spacing:0.042px;;-webkit-text-stroke:0">Non incassata</div>
<div class="t" id="t94" style="left:23.40px;top:450.10px;font-size:10.6px;font-weight:400;color:#717479;letter-spacing:-0.254px;word-spacing:0.8px">0<span class="n1">1</span> Aprile 2026</div>
<div class="t" id="t95" style="left:129.00px;top:450.10px;font-size:10.6px;font-weight:400;color:#4a87ed;letter-spacing:-0.097px;">Fattura - N. 7<span class="n1">1</span>5CFH del 0<span class="n1">1</span>/04/2026</div>
<div class="t" id="t96" style="left:745.00px;top:451.11px;font-size:10.3px;font-weight:400;color:#717479;letter-spacing:-0.167px;"><span style="display:inline-block;transform:scaleX(0.8);transform-origin:0 0;margin-right:-4.3px">EUR</span> <span class="n1">1</span>00,00</div>
<div class="t" id="t97" style="left:840.00px;top:451.50px;font-size:7.6px;font-weight:700;color:#ffffff;letter-spacing:0.111px;;-webkit-text-stroke:0">Consegnata</div>
<div class="t" id="t98" style="left:930.00px;top:451.50px;font-size:7.6px;font-weight:700;color:#ffffff;letter-spacing:0.042px;;-webkit-text-stroke:0">Non incassata</div>
<div class="t" id="t99" style="left:23.40px;top:467.70px;font-size:10.6px;font-weight:400;color:#717479;letter-spacing:-0.392px;word-spacing:0.8px">3<span class="n1">1</span> Marzo 2026</div>
<div class="t" id="t100" style="left:129.00px;top:467.70px;font-size:10.6px;font-weight:400;color:#4a87ed;letter-spacing:-0.124px;">Fattura - N. 7<span class="n1">1</span>2CFH del 20/0<span class="n1">1</span>/2026</div>
<div class="t" id="t101" style="left:745.00px;top:468.72px;font-size:10.3px;font-weight:400;color:#717479;letter-spacing:-0.278px;"><span style="display:inline-block;transform:scaleX(0.8);transform-origin:0 0;margin-right:-4.3px">EUR</span> <span class="n1">1</span>22,00</div>
<div class="t" id="t102" style="left:840.00px;top:469.11px;font-size:7.6px;font-weight:700;color:#ffffff;letter-spacing:0.111px;;-webkit-text-stroke:0">Consegnata</div>
<div class="t" id="t103" style="left:930.00px;top:469.11px;font-size:7.6px;font-weight:700;color:#ffffff;letter-spacing:0.042px;;-webkit-text-stroke:0">Non incassata</div>
<div class="t" id="t104" style="left:23.40px;top:485.31px;font-size:10.6px;font-weight:400;color:#717479;letter-spacing:-0.392px;word-spacing:0.8px">3<span class="n1">1</span> Marzo 2026</div>
<div class="t" id="t105" style="left:129.00px;top:485.31px;font-size:10.6px;font-weight:400;color:#4a87ed;letter-spacing:-0.061px;">Fattura - N. 7<span class="n1">1</span>3CFH del 20/02/2026</div>
<div class="t" id="t106" style="left:745.00px;top:486.31px;font-size:10.3px;font-weight:400;color:#717479;letter-spacing:-0.225px;"><span style="display:inline-block;transform:scaleX(0.8);transform-origin:0 0;margin-right:-4.3px">EUR</span> <span class="n1">1</span>4,85</div>
<div class="t" id="t107" style="left:840.00px;top:486.70px;font-size:7.6px;font-weight:700;color:#ffffff;letter-spacing:0.111px;;-webkit-text-stroke:0">Consegnata</div>
<div class="t" id="t108" style="left:930.00px;top:486.70px;font-size:7.6px;font-weight:700;color:#ffffff;letter-spacing:0.042px;;-webkit-text-stroke:0">Non incassata</div>
<div class="t" id="t109" style="left:23.40px;top:502.90px;font-size:10.6px;font-weight:400;color:#717479;letter-spacing:-0.392px;word-spacing:0.8px">3<span class="n1">1</span> Marzo 2026</div>
<div class="t" id="t110" style="left:129.00px;top:502.90px;font-size:10.6px;font-weight:400;color:#4a87ed;letter-spacing:-0.097px;">Fattura - N. 7<span class="n1">1</span><span class="n1">1</span>CFH del 30/04/2026</div>
<div class="t" id="t111" style="left:745.00px;top:503.91px;font-size:10.3px;font-weight:400;color:#717479;letter-spacing:-0.233px;"><span style="display:inline-block;transform:scaleX(0.8);transform-origin:0 0;margin-right:-4.3px">EUR</span> 24.400,00</div>
<div class="t" id="t112" style="left:840.00px;top:504.30px;font-size:7.6px;font-weight:700;color:#ffffff;letter-spacing:0.111px;;-webkit-text-stroke:0">Consegnata</div>
<div class="t" id="t113" style="left:930.00px;top:504.30px;font-size:7.6px;font-weight:700;color:#ffffff;letter-spacing:0.042px;;-webkit-text-stroke:0">Non incassata</div>
<div class="t" id="t114" style="left:23.40px;top:520.51px;font-size:10.6px;font-weight:400;color:#717479;letter-spacing:-0.392px;word-spacing:0.8px">3<span class="n1">1</span> Marzo 2026</div>
<div class="t" id="t115" style="left:129.00px;top:520.51px;font-size:10.6px;font-weight:400;color:#4a87ed;letter-spacing:0.037px;">Fattura - N. 599 del <span class="n1">1</span>5/07/2025</div>
<div class="t" id="t116" style="left:745.00px;top:521.50px;font-size:10.3px;font-weight:400;color:#717479;letter-spacing:-0.233px;"><span style="display:inline-block;transform:scaleX(0.8);transform-origin:0 0;margin-right:-4.3px">EUR</span> 24.400,00</div>
<div class="t" id="t117" style="left:840.00px;top:521.91px;font-size:7.6px;font-weight:700;color:#ffffff;letter-spacing:0.111px;;-webkit-text-stroke:0">Consegnata</div>
<div class="t" id="t118" style="left:933.40px;top:521.91px;font-size:7.6px;font-weight:700;color:#ffffff;letter-spacing:0.400px;;-webkit-text-stroke:0">Non pagata</div>
<div class="t" id="t119" style="left:23.40px;top:538.10px;font-size:10.6px;font-weight:400;color:#717479;letter-spacing:-0.392px;word-spacing:0.8px">3<span class="n1">1</span> Marzo 2026</div>
<div class="t" id="t120" style="left:129.00px;top:538.10px;font-size:10.6px;font-weight:400;color:#4a87ed;letter-spacing:-0.056px;">Fattura - N. 2400<span class="n1">1</span>63 del <span class="n1">1</span>3/<span class="n1">1</span>2/2024</div>
<div class="t" id="t121" style="left:745.00px;top:539.11px;font-size:10.3px;font-weight:400;color:#717479;letter-spacing:-0.250px;"><span style="display:inline-block;transform:scaleX(0.8);transform-origin:0 0;margin-right:-4.3px">EUR</span> <span class="n1">1</span>5.250,00</div>
<div class="t" id="t122" style="left:840.00px;top:539.50px;font-size:7.6px;font-weight:700;color:#ffffff;letter-spacing:0.111px;;-webkit-text-stroke:0">Consegnata</div>
<div class="t" id="t123" style="left:942.80px;top:539.50px;font-size:7.6px;font-weight:700;color:#ffffff;letter-spacing:0.240px;;-webkit-text-stroke:0">Pagata</div>
</body></html>
